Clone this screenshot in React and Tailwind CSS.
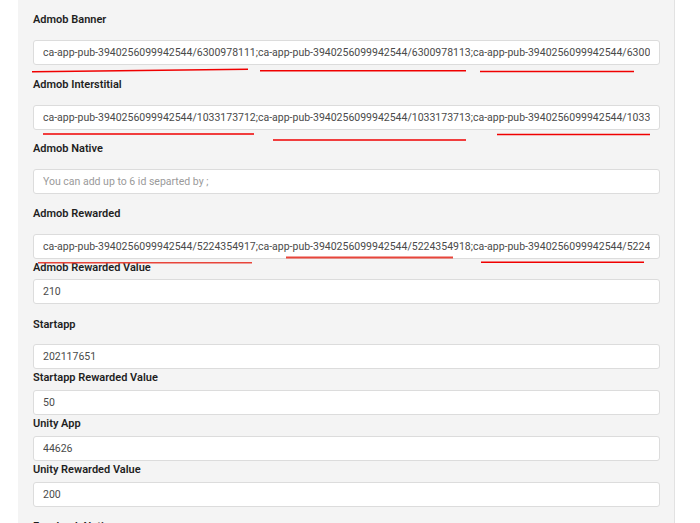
import React from "react";

const fields = [
  { label: "Admob Banner", value: "ca-app-pub-3940256099942544/6300978111;ca-app-pub-3940256099942544/6300978113;ca-app-pub-3940256099942544/6300978114;ca-app-pub-3940256099942544/6300978115", lm: "mt-[13px]", im: "mt-[13px]" },
  { label: "Admob Interstitial", value: "ca-app-pub-3940256099942544/1033173712;ca-app-pub-3940256099942544/1033173713;ca-app-pub-3940256099942544/1033173714;ca-app-pub-3940256099942544/1033173715", lm: "mt-[13px]", im: "mt-[13px]" },
  { label: "Admob Native", value: "", placeholder: "You can add up to 6 id separted by ;", lm: "mt-[12px]", im: "mt-[13px]" },
  { label: "Admob Rewarded", value: "ca-app-pub-3940256099942544/5224354917;ca-app-pub-3940256099942544/5224354918;ca-app-pub-3940256099942544/5224354919;ca-app-pub-3940256099942544/5224354920", lm: "mt-[13px]", im: "mt-[13px]" },
  { label: "Admob Rewarded Value", value: "210", lm: "mt-[2px]", im: "mt-[4px]" },
  { label: "Startapp", value: "202117651", lm: "mt-[14px]", im: "mt-[12px]" },
  { label: "Startapp Rewarded Value", value: "50", lm: "mt-[2px]", im: "mt-[5px]" },
  { label: "Unity App", value: "44626", lm: "mt-[2px]", im: "mt-[5px]" },
  { label: "Unity Rewarded Value", value: "200", lm: "mt-[2px]", im: "mt-[5px]" },
  { label: "Facebook Native", value: "", lm: "mt-[13px]", im: "mt-[13px]" },
];

const lines = [
  [32, 71.7, 248, 69.2, "#f00000", 1.6],
  [260, 70.7, 466, 70.7, "#f00000", 1.6],
  [480, 71.5, 634, 71.5, "#f00000", 1.6],
  [43, 134, 254, 134, "#f00000", 1.6],
  [273, 140, 466, 140, "#f00000", 1.6],
  [497, 134.5, 650, 134.5, "#f00000", 1.6],
  [38, 262.7, 252, 262.7, "#e8453a", 1.6],
  [286, 257.5, 453, 257.5, "#e8453a", 2],
  [481, 262.3, 644, 262.3, "#f00000", 1.6],
];

function Field({ label, value, placeholder, lm, im }) {
  return (
    <div className={"shrink-0 " + lm}>
      <div className="h-[14px] text-[11px] leading-[14px] font-semibold text-[#1e1e1e] whitespace-nowrap">{label}</div>
      <input
        readOnly
        value={value}
        placeholder={placeholder}
        className={
          "block w-full h-[25px] rounded-[3px] border border-[#dcdcdc] bg-white px-[9px] text-[10.5px] text-[#4a4a4a] placeholder:text-[#9a9a9a] outline-none font-['Roboto',sans-serif] " +
          im
        }
      />
    </div>
  );
}

export default function App() {
  return (
    <div className="relative w-[700px] h-[523px] overflow-hidden bg-white font-['Roboto',sans-serif]">
      <div className="ml-[18px] w-[657px] h-[523px] flex flex-col overflow-hidden bg-[#f4f4f4] border-r border-[#e2e2e2] pl-[15px] pr-[14px]">
        {fields.map((f) => (
          <Field key={f.label} {...f} />
        ))}
      </div>
      <svg className="absolute inset-0 pointer-events-none" width="700" height="523">
        {lines.map(([x1, y1, x2, y2, c, w], i) => (
          <line key={i} x1={x1} y1={y1} x2={x2} y2={y2} stroke={c} strokeWidth={w} />
        ))}
      </svg>
    </div>
  );
}
